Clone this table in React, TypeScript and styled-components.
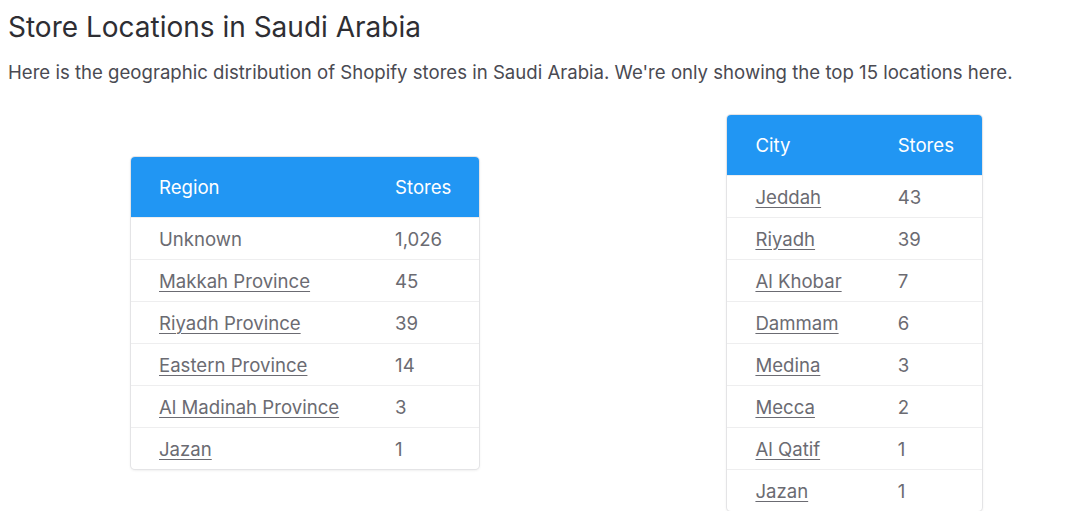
import React from "react";
import styled, { createGlobalStyle } from "styled-components";

const Global = createGlobalStyle`
  body {
    margin: 8px;
    font-family: Inter, "Noto Sans", sans-serif;
    background: #ffffff;
    color: #333;
  }
`;

const Title = styled.h1`
  font-size: 28px;
  font-weight: 400;
  color: #2e2e33;
  margin: 2px 0 0 0;
  line-height: 34px;
`;

const Intro = styled.p`
  font-size: 18.6px;
  color: #4a4a52;
  margin: 14px 0 0 0;
  line-height: 28px;
`;

const Tables = styled.div`
  display: flex;
  align-items: center;
  padding-left: 123px;
  gap: 248px;
  margin-top: 29px;
`;

const Card = styled.div`
  border-radius: 4px;
  overflow: hidden;
  box-shadow: 0 0 0 1px #e4e4e6, 0 1px 3px rgba(0, 0, 0, 0.12);
  background: #fff;
`;

const Table = styled.table`
  border-collapse: collapse;
  font-size: 18.6px;
`;

const HeadCell = styled.th`
  background: #2196f3;
  color: #fff;
  font-weight: 400;
  text-align: left;
  padding: 0 28px;
  height: 60px;
`;

const Cell = styled.td`
  color: #6b6b72;
  padding: 0 28px;
  height: 41px;
  border-top: 1px solid #eeeeef;
  white-space: nowrap;
`;

const Link = styled.a`
  color: #6b6b72;
  text-decoration: underline;
  text-underline-offset: 3px;
  text-decoration-thickness: 1px;
`;

type Row = { name: string; count: string; link: boolean };

const regions: Row[] = [
  { name: "Unknown", count: "1,026", link: false },
  { name: "Makkah Province", count: "45", link: true },
  { name: "Riyadh Province", count: "39", link: true },
  { name: "Eastern Province", count: "14", link: true },
  { name: "Al Madinah Province", count: "3", link: true },
  { name: "Jazan", count: "1", link: true },
];

const cities: Row[] = [
  { name: "Jeddah", count: "43", link: true },
  { name: "Riyadh", count: "39", link: true },
  { name: "Al Khobar", count: "7", link: true },
  { name: "Dammam", count: "6", link: true },
  { name: "Medina", count: "3", link: true },
  { name: "Mecca", count: "2", link: true },
  { name: "Al Qatif", count: "1", link: true },
  { name: "Jazan", count: "1", link: true },
];

function DataTable({ label, rows }: { label: string; rows: Row[] }) {
  return (
    <Card>
      <Table>
        <thead>
          <tr>
            <HeadCell>{label}</HeadCell>
            <HeadCell>Stores</HeadCell>
          </tr>
        </thead>
        <tbody>
          {rows.map((r, i) => (
            <tr key={i}>
              <Cell>{r.link ? <Link href="#">{r.name}</Link> : r.name}</Cell>
              <Cell>{r.count}</Cell>
            </tr>
          ))}
        </tbody>
      </Table>
    </Card>
  );
}

export default function App() {
  return (
    <>
      <Global />
      <Title>Store Locations in Saudi Arabia</Title>
      <Intro>
        Here is the geographic distribution of Shopify stores in Saudi Arabia. We're only showing the top 15 locations here.
      </Intro>
      <Tables>
        <DataTable label="Region" rows={regions} />
        <DataTable label="City" rows={cities} />
      </Tables>
    </>
  );
}
